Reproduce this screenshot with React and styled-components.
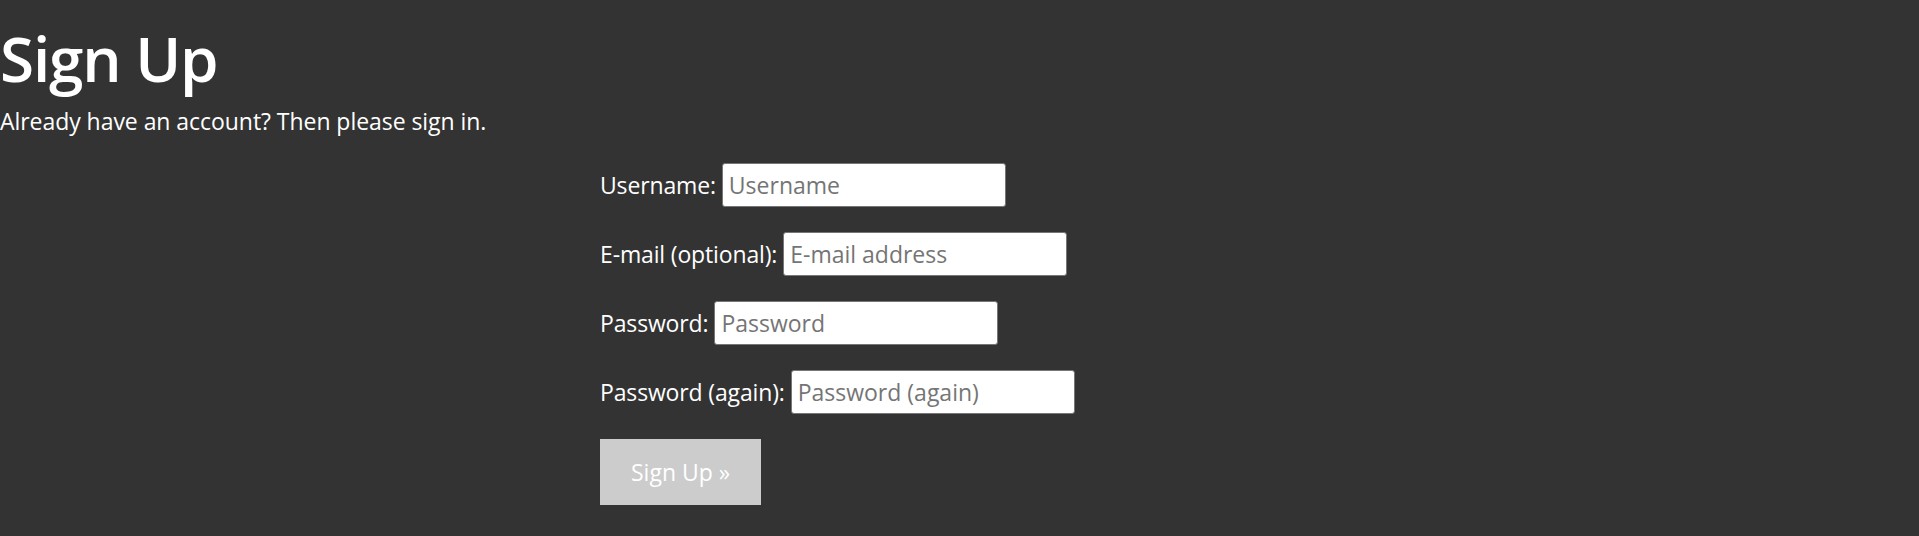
import styled, { createGlobalStyle } from "styled-components";

const GlobalStyle = createGlobalStyle`
  html, body {
    margin: 0;
    padding: 0;
    background: #333333;
  }
  body {
    color: #ffffff;
    font-family: "Open Sans", "Noto Sans", sans-serif;
  }
`;

const Page = styled.div`
  min-height: 536px;
  background: #333333;
`;

const Header = styled.header`
  padding-top: 27px;
`;

const Title = styled.h1`
  margin: 0;
  font-size: 62px;
  line-height: 62px;
  font-weight: 600;
  letter-spacing: -1.2px;
`;

const Lead = styled.p`
  margin: 21px 0 0;
  font-size: 23px;
  line-height: 23px;
  letter-spacing: -0.05px;
`;

const Form = styled.form`
  margin: 30px 0 0 600px;
  display: flex;
  flex-direction: column;
  gap: 25px;
`;

const Row = styled.div`
  display: flex;
  align-items: baseline;
  gap: 6px;
`;

const Label = styled.label`
  font-size: 23px;
  letter-spacing: -0.15px;
`;

const Input = styled.input`
  box-sizing: border-box;
  width: 284px;
  height: 44px;
  padding: 0 6px;
  border: 1px solid #767676;
  border-radius: 3px;
  background: #ffffff;
  font-family: inherit;
  font-size: 23px;
  color: #222;

  &::placeholder {
    color: #757575;
  }
`;

const Submit = styled.button`
  align-self: flex-start;
  height: 66px;
  padding: 0 31px;
  border: none;
  background: #cccccc;
  color: #ffffff;
  font-family: inherit;
  font-size: 23px;
  cursor: pointer;
`;

const fields = [
  { id: "username", label: "Username:", type: "text", placeholder: "Username" },
  { id: "email", label: "E-mail (optional):", type: "email", placeholder: "E-mail address" },
  { id: "password1", label: "Password:", type: "password", placeholder: "Password" },
  { id: "password2", label: "Password (again):", type: "password", placeholder: "Password (again)" },
];

export default function App() {
  return (
    <>
      <GlobalStyle />
      <Page>
        <Header>
          <Title>Sign Up</Title>
          <Lead>Already have an account? Then please sign in.</Lead>
        </Header>
        <Form onSubmit={(e) => e.preventDefault()}>
          {fields.map((f) => (
            <Row key={f.id}>
              <Label htmlFor={f.id}>{f.label}</Label>
              <Input id={f.id} name={f.id} type={f.type} placeholder={f.placeholder} />
            </Row>
          ))}
          <Submit type="submit">Sign Up »</Submit>
        </Form>
      </Page>
    </>
  );
}
